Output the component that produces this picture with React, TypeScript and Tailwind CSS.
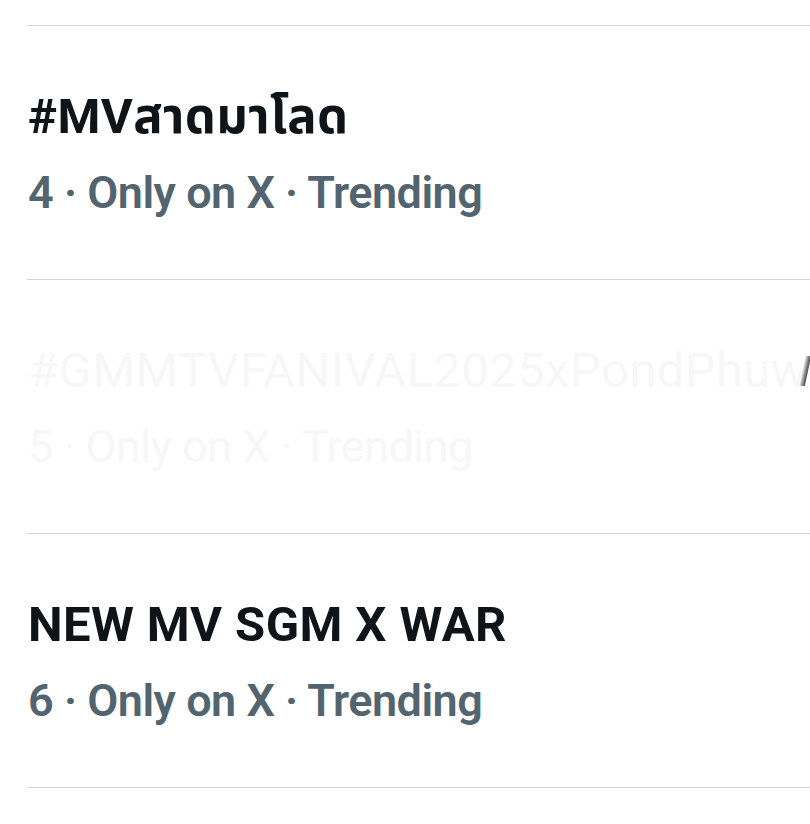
import React from "react";

type Trend = {
  rank: number;
  title: string;
  faded?: boolean;
};

const trends: Trend[] = [
  { rank: 4, title: "#MVสาดมาโลด" },
  { rank: 5, title: "#GMMTVFANIVAL2025xPondPhuwin", faded: true },
  { rank: 6, title: "NEW MV SGM X WAR" },
];

function TrendRow({ trend }: { trend: Trend }) {
  const titleColor = trend.faded ? "text-[#f7f7f7] font-normal" : "text-[#0f1419] font-bold";
  const metaColor = trend.faded ? "text-[#f7f7f7] font-normal" : "text-[#536471] font-semibold";

  return (
    <div className="border-b border-[#d3d6d9] pt-[61px] pb-[56px] overflow-hidden">
      <div className={`flex items-center whitespace-nowrap text-[49px] leading-[60px] tracking-[0.4px] ${titleColor}`}>
        <span className="pl-px min-w-0 overflow-hidden">{trend.title}</span>
        {trend.faded && (
          <span className="ml-auto mr-[2px] shrink-0 inline-block w-[6px] h-[30px] -skew-x-12 bg-gradient-to-r from-white to-[#444]" />
        )}
      </div>
      <div className={`mt-4 whitespace-nowrap text-[45px] leading-[60px] tracking-[-0.5px] ${metaColor}`}>
        <span className="pl-px">{trend.rank} · Only on X · Trending</span>
      </div>
    </div>
  );
}

export default function App() {
  return (
    <div className="w-[810px] h-[824px] bg-white overflow-hidden font-['Roboto','Noto_Sans','Noto_Sans_Thai',sans-serif]">
      <div className="pt-[25px] pl-[27px]">
        <div className="border-t border-[#d3d6d9]">
          {trends.map((t) => (
            <TrendRow key={t.rank} trend={t} />
          ))}
        </div>
      </div>
    </div>
  );
}
